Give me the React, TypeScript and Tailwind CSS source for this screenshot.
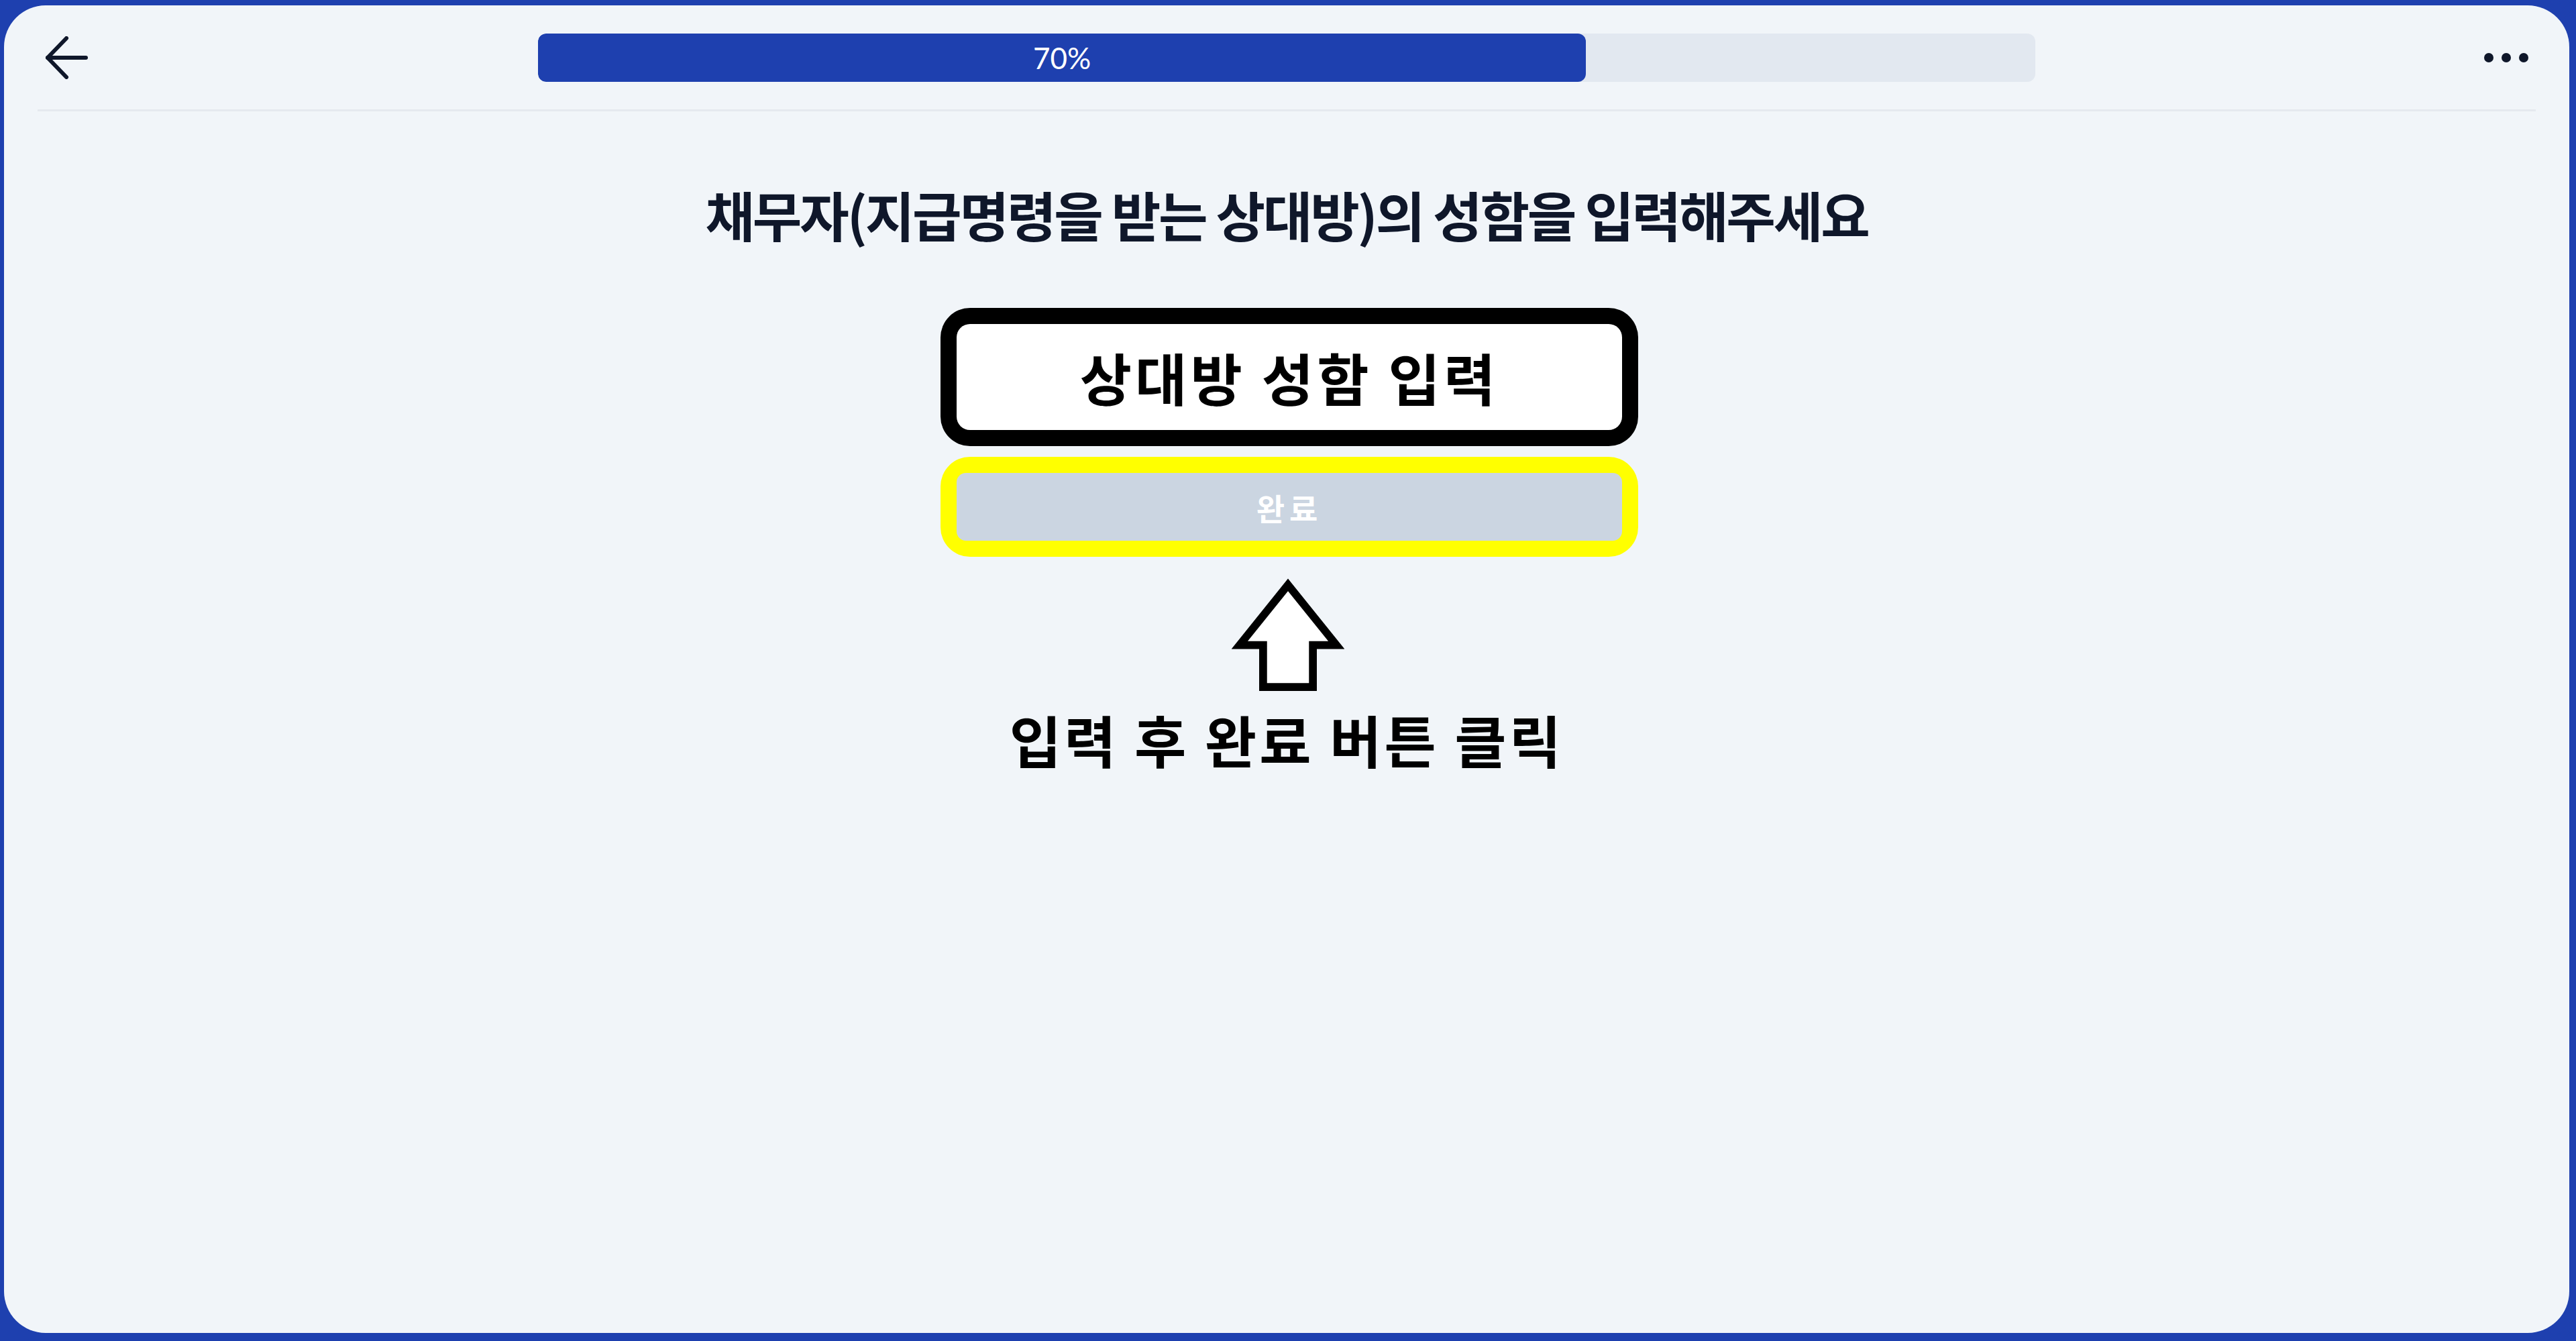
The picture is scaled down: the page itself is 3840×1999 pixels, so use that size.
export default function App() {
  return (
    // blue outer frame
    <div className="h-screen w-full bg-[#1e40af] pt-[8px] pl-[6px] pr-[10px] pb-[12px] font-['Noto_Sans_CJK_KR','Noto_Sans',sans-serif]">
      <div className="flex h-full w-full flex-col rounded-[62px] bg-[#f1f5f9]">
        {/* header */}
        <header className="mx-[50px] grid h-[158px] grid-cols-[1fr_2232px_1fr] items-center border-b-[3px] border-[#e5e9ef]">
          <div className="flex items-center pl-[10px]">
            <svg width="66" height="64" viewBox="0 0 66 64" fill="none" stroke="#0f172a" strokeWidth="6" strokeLinecap="round" strokeLinejoin="round">
              <path d="M62 32H5" />
              <path d="M33 3L5 32l28 29" />
            </svg>
          </div>
          <div className="flex h-[72px] overflow-hidden rounded-[12px] bg-[#e2e8f0]">
            <div className="flex w-[70%] items-center justify-center rounded-[12px] bg-[#1e40af]">
              <span className="font-['Lato',sans-serif] text-[44px] font-normal text-white">70%</span>
            </div>
          </div>
          <div className="flex items-center justify-end gap-[12px] pr-[11px]">
            <span className="h-[14px] w-[14px] rounded-full bg-[#0f172a]" />
            <span className="h-[14px] w-[14px] rounded-full bg-[#0f172a]" />
            <span className="h-[14px] w-[14px] rounded-full bg-[#0f172a]" />
          </div>
        </header>

        {/* content */}
        <main className="flex flex-1 flex-col items-center">
          <h1 className="mt-[112px] text-[80px] font-bold leading-none tracking-[-0.04em] text-[#0f172a]">
            채무자(지급명령을 받는 상대방)의 성함을 입력해주세요
          </h1>

          <div className="ml-[8px] mt-[101px] w-[1040px] rounded-[44px] bg-black p-[24px]">
            <div className="flex h-[158px] items-center justify-center rounded-[20px] bg-white">
              <span className="text-[84px] font-bold leading-none tracking-[0.06em] text-black">상대방 성함 입력</span>
            </div>
          </div>

          <div className="ml-[8px] mt-[16px] w-[1040px] rounded-[44px] bg-[#ffff00] p-[24px]">
            <button className="flex h-[101px] w-full items-center justify-center rounded-[14px] bg-[#cbd5e1]">
              <span className="text-[46px] font-semibold leading-none tracking-[0.15em] text-white">완료</span>
            </button>
          </div>

          <svg className="ml-[4px] mt-[30px]" width="168" height="176" viewBox="0 0 172 180" fill="#ffffff" stroke="#000000" strokeWidth="12" strokeLinejoin="miter">
            <path d="M86 12L160 104H124V168H48V104H12Z" />
          </svg>

          <p className="mt-[24px] text-[84px] font-bold leading-none tracking-[0.05em] text-black">입력 후 완료 버튼 클릭</p>
        </main>
      </div>
    </div>
  );
}
